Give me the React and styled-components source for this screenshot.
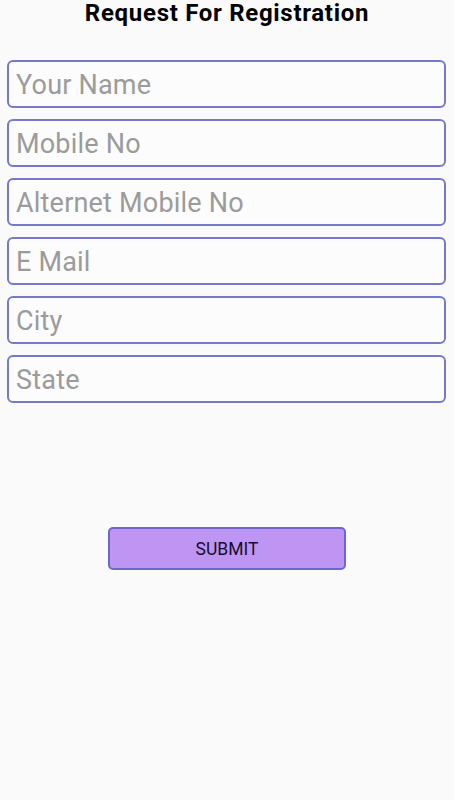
import React from "react";
import styled, { createGlobalStyle } from "styled-components";

const GlobalStyle = createGlobalStyle`
  html, body {
    margin: 0;
    padding: 0;
    background: #fafafa;
    font-family: Roboto, "Liberation Sans", sans-serif;
  }
`;

const Page = styled.div`
  width: 454px;
  min-height: 800px;
  display: flex;
  flex-direction: column;
  background: #fafafa;
`;

const Title = styled.h1`
  margin: 0;
  line-height: 26px;
  font-size: 24px;
  font-weight: 700;
  letter-spacing: 0.7px;
  color: #000;
  text-align: center;
`;

const Form = styled.form`
  display: flex;
  flex-direction: column;
  gap: 11px;
  margin: 34px 8px 0 7px;
`;

const Field = styled.input`
  box-sizing: border-box;
  width: 100%;
  height: 48px;
  padding: 2px 7px 0;
  border: 2px solid #7679c9;
  border-radius: 6px;
  background: #fcfcfc;
  font-family: Roboto, "Liberation Sans", sans-serif;
  font-size: 27px;
  letter-spacing: 0.2px;
  color: #333;
  outline: none;

  &::placeholder {
    color: #9b9b9b;
  }
`;

const Actions = styled.div`
  display: flex;
  justify-content: center;
  margin-top: 124px;
`;

const SubmitButton = styled.button`
  box-sizing: border-box;
  width: 238px;
  height: 43px;
  border: 2px solid #6c66cf;
  border-radius: 5px;
  background: #bf95f4;
  color: #150f2a;
  font-family: Roboto, "Liberation Sans", sans-serif;
  font-size: 17.5px;
  cursor: pointer;
`;

const fields = [
  "Your Name",
  "Mobile No",
  "Alternet Mobile No",
  "E Mail",
  "City",
  "State",
];

const App = () => {
  return (
    <Page>
      <GlobalStyle />
      <Title>Request For Registration</Title>
      <Form onSubmit={(e) => e.preventDefault()}>
        {fields.map((f) => (
          <Field key={f} placeholder={f} />
        ))}
      </Form>
      <Actions>
        <SubmitButton type="button">SUBMIT</SubmitButton>
      </Actions>
    </Page>
  );
};

export default App;
